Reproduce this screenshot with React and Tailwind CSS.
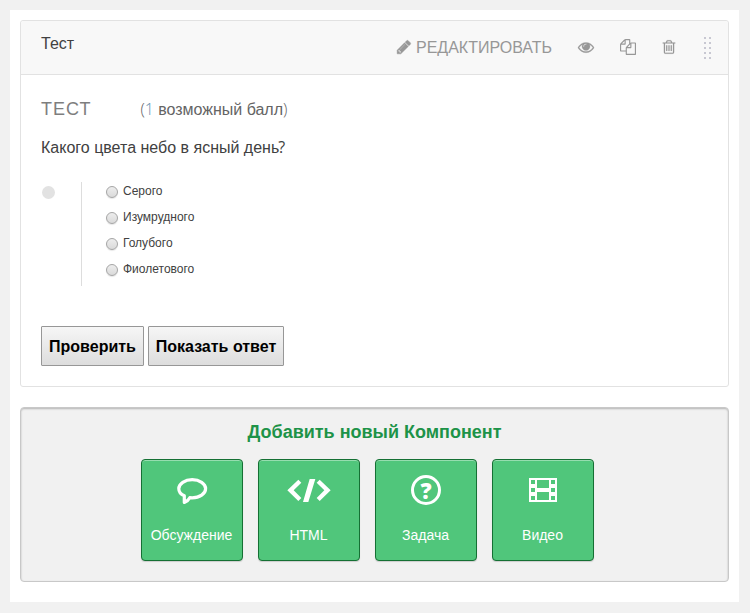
import React from "react";

const PENCIL =
  "M491 1536l91-91-235-235-91 91v107h128v128h107zm523-928q0-22-22-22-10 0-17 7l-542 542q-7 7-7 17 0 22 22 22 10 0 17-7l542-542q7-7 7-17zm-54-192l416 416-832 832h-416v-416zm683 96q0 53-37 90l-166 166-416-416 166-165q36-38 90-38 53 0 91 38l235 234q37 39 37 91z";
const EYE =
  "M1664 960q-152-236-381-353 61 104 61 225 0 185-131.5 316.5t-316.5 131.5-316.5-131.5-131.5-316.5q0-121 61-225-229 117-381 353 133 205 333.5 326.5t434.5 121.5 434.5-121.5 333.5-326.5zm-720-384q0-20-14-34t-34-14q-125 0-214.5 89.5t-89.5 214.5q0 20 14 34t34 14 34-14 14-34q0-86 61-147t147-61q20 0 34-14t14-34zm848 384q0 34-20 69-140 230-376.5 368.5t-499.5 138.5-499.5-139-376.5-368q-20-35-20-69t20-69q140-229 376.5-368t499.5-139 499.5 139 376.5 368q20 35 20 69z";
const COPY =
  "M1696 384q40 0 68 28t28 68v1216q0 40-28 68t-68 28h-960q-40 0-68-28t-28-68v-288h-544q-40 0-68-28t-28-68v-672q0-40 20-88t48-76l408-408q28-28 76-48t88-20h416q40 0 68 28t28 68v328q68-40 128-40h416zm-544 213l-299 299h299v-299zm-640-384l-299 299h299v-299zm196 647l316-316v-416h-384v416q0 40-28 68t-68 28h-416v640h512v-256q0-40 20-88t48-76zm956 804v-1152h-384v416q0 40-28 68t-68 28h-416v640h896z";
const TRASH =
  "M704 736v576q0 14-9 23t-23 9h-64q-14 0-23-9t-9-23v-576q0-14 9-23t23-9h64q14 0 23 9t9 23zm256 0v576q0 14-9 23t-23 9h-64q-14 0-23-9t-9-23v-576q0-14 9-23t23-9h64q14 0 23 9t9 23zm256 0v576q0 14-9 23t-23 9h-64q-14 0-23-9t-9-23v-576q0-14 9-23t23-9h64q14 0 23 9t9 23zm128 724v-948h-896v948q0 22 7 40.5t14.5 27 10.5 8.5h832q3 0 10.5-8.5t14.5-27 7-40.5zm-672-1076h448l-48-117q-7-9-17-11h-317q-10 2-17 11zm928 32v64q0 14-9 23t-23 9h-96v948q0 83-47 143.5t-113 60.5h-832q-66 0-113-58.5t-47-141.5v-952h-96q-14 0-23-9t-9-23v-64q0-14 9-23t23-9h309l70-167q15-37 54-63t79-26h320q40 0 79 26t54 63l70 167h309q14 0 23 9t9 23z";

function Glyph({ d, weight = 0, className = "" }) {
  return (
    <svg
      viewBox="0 0 1792 1792"
      fill="currentColor"
      stroke="currentColor"
      strokeWidth={weight}
      className={`size-4 shrink-0 overflow-visible ${className}`}
    >
      <path d={d} />
    </svg>
  );
}

function DragHandle() {
  return (
    <svg width="8" height="22" viewBox="0 0 8 22" fill="#c8c8d2" shapeRendering="crispEdges">
      {[0, 5, 10, 15, 20].map((y) => (
        <g key={y}>
          <rect x="0" y={y} width="2" height="2" />
          <rect x="5" y={y} width="2" height="2" />
        </g>
      ))}
    </svg>
  );
}

function BubbleIcon() {
  return (
    <svg width="31" height="27" viewBox="0 0 31 27" fill="none" stroke="#fff" strokeWidth="3.2" strokeLinejoin="round">
      <path d="M15.200 1.700C7.900 1.700 1.800 5.700 1.800 10.700c0 3 2.100 5.600 5.500 7.100v6.700c2.400-.9 4.200-2.400 5.500-4.800l2.400.1c7.400 0 13.400-4.100 13.400-9.100S22.500 1.700 15.200 1.700z" />
    </svg>
  );
}

function CodeIcon() {
  return (
    <svg width="44" height="23" viewBox="0 0 130 69" fill="#fff">
      <path d="M0 34 33 2 42 11 19 34 42 57 33 66zM67 0h17L63 69H47zM130 34 97 2 88 11 111 34 88 57 97 66z" />
    </svg>
  );
}

function QuestionIcon() {
  return (
    <span className="flex size-[30px] items-center justify-center rounded-full border-3 border-white font-['Open_Sans',sans-serif] text-[22px] leading-none font-extrabold">
      ?
    </span>
  );
}

function FilmIcon() {
  return (
    <svg width="28" height="24" viewBox="0 0 28 24" fill="#fff" fillRule="evenodd" shapeRendering="crispEdges">
      <path d="M0 0h28v24H0zM2 2v4h4V2zM2 10v4h4v-4zM2 18v4h4v-4zM22 2v4h4V2zM22 10v4h4v-4zM22 18v4h4v-4zM8 2v8h12V2zM8 14v8h12v-8z" />
    </svg>
  );
}

const OPTIONS = ["Серого", "Изумрудного", "Голубого", "Фиолетового"];

const COMPONENTS = [
  { label: "Обсуждение", icon: <BubbleIcon />, iconClass: "pt-0.5" },
  { label: "HTML", icon: <CodeIcon />, iconClass: "" },
  { label: "Задача", icon: <QuestionIcon />, iconClass: "" },
  { label: "Видео", icon: <FilmIcon />, iconClass: "" },
];

function CardHeader() {
  return (
    <header className="flex h-[54px] items-start justify-between rounded-t-[3px] border-b border-[#e2e2e2] bg-[#f8f8f8] pr-4 pl-5">
      <h2 className="pt-[11px] text-base leading-6 text-[#414141]">Тест</h2>
      <div className="flex h-[53px] items-center text-[#979797]">
        <Glyph d={PENCIL} weight={50} className="mb-px" />
        <span className="ml-[4px] w-[136px] text-base leading-6">РЕДАКТИРОВАТЬ</span>
        <Glyph d={EYE} weight={30} className="mb-px ml-[26px]" />
        <Glyph d={COPY} className="mb-px ml-[26px]" />
        <Glyph d={TRASH} weight={15} className="mb-px ml-[25px]" />
        <span className="ml-[27px]">
          <DragHandle />
        </span>
      </div>
    </header>
  );
}

function Problem() {
  return (
    <div className="px-5 pt-[22px] pb-5 text-[#414141]">
      <div className="flex h-6 items-center">
        <h3 className="w-[99.5px] text-lg leading-6 tracking-[1px] text-[#7e7e7e]">ТЕСТ</h3>
        <p className="pt-px text-base leading-6 text-[#646464]">
          <span className="font-['Open_Sans',sans-serif] font-light">
            (<span className="text-[#5f8fae]">1</span>{" "}
          </span>
          возможный балл
          <span className="font-['Open_Sans',sans-serif] font-light">)</span>
        </p>
      </div>
      <p className="mt-[14px] text-base leading-6">
        Какого цвета небо в ясный день<span className="-ml-px font-['Open_Sans',sans-serif]">?</span>
      </p>
      <div className="mt-[22px] flex h-[104px]">
        <div className="w-10 pt-[4px] pl-px">
          <div className="size-[13px] rounded-full bg-[#e2e2e2]" />
        </div>
        <div className="border-l border-[#dddddd] pl-6">
          {OPTIONS.map((option) => (
            <label key={option} className="flex h-[26px] items-start text-xs leading-[18px]">
              <span className="mt-1 mr-[5px] size-3 rounded-full border border-[#a5a5a5] bg-linear-to-b from-[#ededed] to-[#dadada] shadow-[0_1px_1px_rgba(0,0,0,0.1)]" />
              {option}
            </label>
          ))}
        </div>
      </div>
      <div className="mt-10 flex gap-1 text-base font-bold text-black">
        <button className="h-10 w-[103px] rounded-[1px] border border-[#979797] bg-linear-to-b from-[#f6f6f6] to-[#dddddd] pt-0.5 whitespace-nowrap">
          Проверить
        </button>
        <button className="h-10 w-[136px] rounded-[1px] border border-[#979797] bg-linear-to-b from-[#f6f6f6] to-[#dddddd] pt-0.5 whitespace-nowrap">
          Показать ответ
        </button>
      </div>
    </div>
  );
}

function AddComponent() {
  return (
    <section className="mt-5 h-[175px] rounded-[4px] border border-[#c8c8c8] bg-[#f1f1f1] pt-3 shadow-[inset_0_1px_2px_rgba(0,0,0,0.25)]">
      <h3 className="text-center text-lg leading-6 font-bold text-[#1d9348]">Добавить новый Компонент</h3>
      <div className="mt-[15px] flex gap-[15px] pl-[120px]">
        {COMPONENTS.map(({ label, icon, iconClass }) => (
          <button
            key={label}
            className="flex size-[102px] flex-col items-center rounded-[4px] border border-[#157034] bg-[#50c67b] pt-[14px] text-white shadow-[inset_0_1px_0_rgba(255,255,255,0.4),0_1px_1px_rgba(0,0,0,0.15)]"
          >
            <span className={`flex h-8 items-center ${iconClass}`}>{icon}</span>
            <span className="mt-[17px] pr-px text-sm leading-6">{label}</span>
          </button>
        ))}
      </div>
    </section>
  );
}

export default function App() {
  return (
    <div className="h-[613px] w-[750px] overflow-hidden bg-[#f1f1f1] p-[10px] font-['Liberation_Sans',Arial,sans-serif]">
      <main className="h-[592px] w-[729px] bg-white p-[10px]">
        <article className="h-[367px] rounded-[3px] border border-[#e2e2e2] bg-white">
          <CardHeader />
          <Problem />
        </article>
        <AddComponent />
      </main>
    </div>
  );
}
